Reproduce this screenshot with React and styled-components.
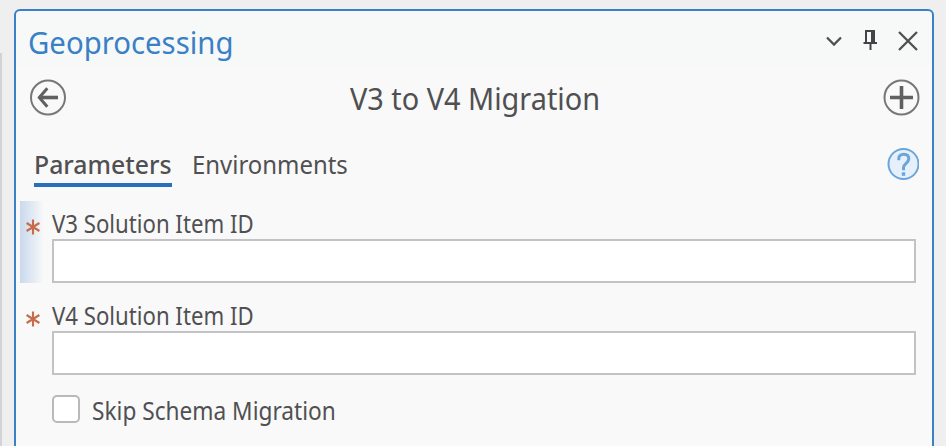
import React from 'react';
import styled, { createGlobalStyle } from 'styled-components';

const GlobalStyle = createGlobalStyle`
  *, *::before, *::after { box-sizing: border-box; }
  body {
    margin: 0;
    overflow: hidden;
    background: #efeff0;
    color: #505052;
    font-family: "Noto Sans", "Open Sans", sans-serif;
  }
`;

const Desktop = styled.div`
  display: flex;
  width: 946px;
  height: 446px;
  padding: 9px 12px 0 0;
`;

const DockEdge = styled.div`
  width: 2px;
  margin: 44px 12px 0 0;
  background: #d3d3d6;
`;

const Panel = styled.section`
  width: 920px;
  height: 437px;
  border: 2px solid #3a80c4;
  border-bottom: 0;
  border-radius: 6px 6px 0 0;
  background: linear-gradient(#f7f9f9 0 57px, #f9f9f9 57px);
`;

const Bar = styled.header`
  display: flex;
  align-items: center;
  justify-content: space-between;
  height: ${(p) => p.$height}px;
  padding: ${(p) => p.$padding};
`;

const Label = styled.span`
  display: block;
  margin: ${(p) => p.$drop || 0}px 0 0;
  white-space: pre;
  font-size: ${(p) => p.$size}px;
  line-height: ${(p) => p.$line || 36}px;
  font-weight: ${(p) => p.$weight || 400};
  color: ${(p) => p.$color || 'inherit'};
  transform: scaleX(${(p) => p.$condense || 1});
  transform-origin: ${(p) => p.$origin || 'left'} center;
`;

const WindowButtons = styled.div`
  display: flex;
  align-items: center;
`;

const IconButton = styled.button`
  display: block;
  width: ${(p) => p.$w}px;
  height: ${(p) => p.$h}px;
  margin: 0 0 ${(p) => p.$lift || 0}px ${(p) => p.$gap || 0}px;
  padding: 0;
  border: 0;
  background: none;
  svg { display: block; }
`;

const TabBar = styled.nav`
  display: flex;
  align-items: flex-start;
  height: 62px;
  padding: 18px 13px 0 18px;
`;

const Tab = styled.div`
  width: ${(p) => p.$width}px;
  height: 41px;
  margin-right: 20px;
  border-bottom: 4px solid ${(p) => (p.$active ? '#2a6fbb' : 'transparent')};
`;

const Help = styled.div`
  margin-left: auto;
  svg { display: block; }
`;

const Form = styled.div`
  display: flex;
  flex-direction: column;
  gap: 10px;
  padding: 11px 16px 0 4px;
`;

const Field = styled.label`
  display: grid;
  grid-template-columns: 32px 1fr;
  grid-template-rows: 38px 44px;
  background: ${(p) => (p.$active ? 'linear-gradient(90deg, #c9d9ec 0, #f9f9f9 24px)' : 'none')};
`;

const Required = styled.div`
  padding: 17px 0 0 5px;
  svg { display: block; }
`;

const Input = styled.input`
  grid-column: 2;
  width: 864px;
  height: 44px;
  border: 2px solid #c3c3c7;
  border-radius: 0;
  background: #fff;
  outline: none;
`;

const CheckRow = styled.label`
  display: flex;
  align-items: center;
  gap: 12px;
  height: 28px;
  margin: 10px 0 0 32px;
`;

const CheckBox = styled.span`
  width: 28px;
  height: 28px;
  border: 2px solid #b9b9bd;
  border-radius: 5px;
  background: #fff;
`;

const Star = () => (
  <svg width="16" height="18" viewBox="0 0 16 18" stroke="#c66c4b" strokeWidth="2.1" fill="none">
    <path d="M8 1.5V16.5M1.6 5L14.4 13M14.4 5L1.6 13" />
  </svg>
);

const ParamField = ({ name, active }) => (
  <Field $active={active}>
    <Required><Star /></Required>
    <Label $size={24.5} $line={46} $condense={0.905}>{name}</Label>
    <Input />
  </Field>
);

export default function App() {
  return (
    <>
      <GlobalStyle />
      <Desktop>
        <DockEdge />
        <Panel>
          <Bar $height={57} $padding="4px 14px 0 12px">
            <Label $size={30} $drop={2} $color="#3980c6" $condense={0.978}>Geoprocessing</Label>
            <WindowButtons>
              <IconButton $w={16} $h={12} $lift={1} aria-label="Options">
                <svg width="16" height="12" fill="none" stroke="#505052" strokeWidth="2.3"><path d="M1 2.5L8 9.5L15 2.5" /></svg>
              </IconButton>
              <IconButton $w={16} $h={22} $gap={20} $lift={4} aria-label="Auto hide">
                <svg width="16" height="22" fill="none" stroke="#444446" strokeWidth="2"><path d="M4 14V2H12V14M1.5 14H15M8.5 14V21" /><path d="M10.5 2V14" strokeWidth="3" /></svg>
              </IconButton>
              <IconButton $w={20} $h={20} $gap={20} $lift={2} aria-label="Close">
                <svg width="20" height="20" fill="none" stroke="#505052" strokeWidth="2.3"><path d="M1 1L19 19M19 1L1 19" /></svg>
              </IconButton>
            </WindowButtons>
          </Bar>
          <Bar $height={60} $padding="0 11px 1px 13px">
            <IconButton $w={38} $h={38} aria-label="Back">
              <svg width="38" height="38" viewBox="0 0.5 38 38" fill="none" stroke="#777779"><circle cx="19" cy="19" r="17" strokeWidth="2" /><path d="M29 19H10" stroke="#606062" strokeWidth="3.6" /><path d="M18.3 9.7L10.3 19L18.3 28.3" stroke="#606062" strokeWidth="3" /></svg>
            </IconButton>
            <Label $size={30} $drop={2} $condense={0.962} $origin="center">V3 to V4 Migration</Label>
            <IconButton $w={38} $h={38} aria-label="Add">
              <svg width="38" height="38" viewBox="0.5 0.5 38 38" fill="none" stroke="#777779"><circle cx="19" cy="19" r="17" strokeWidth="2" /><path d="M7.5 19H30.5M19 7.5V30.5" stroke="#606062" strokeWidth="3.6" /></svg>
            </IconButton>
          </Bar>
          <TabBar>
            <Tab $active $width={138}><Label $size={25} $weight={500} $condense={0.992}>Parameters</Label></Tab>
            <Tab $width={160}><Label $size={25} $condense={0.957}>Environments</Label></Tab>
            <Help>
              <svg width="32" height="36" viewBox="0.5 0 32 36" fill="none" stroke="#6ca5d9"><circle cx="17" cy="18" r="15" fill="#e6f0fa" strokeWidth="2" /><path d="M12.3 14.3V12.5C12.3 9.8 14.2 8.2 17.2 8.2C20.4 8.2 22.3 10 22.3 12.8C22.3 17 17 17.5 17 21.5V24.2" strokeWidth="3" /><path d="M17 26.3V29.8" strokeWidth="3.4" /></svg>
            </Help>
          </TabBar>
          <Form>
            <ParamField name="V3 Solution Item ID" active />
            <ParamField name="V4 Solution Item ID" />
            <CheckRow>
              <CheckBox />
              <Label $size={24.5} $drop={3} $condense={0.925}>Skip Schema Migration</Label>
            </CheckRow>
          </Form>
        </Panel>
      </Desktop>
    </>
  );
}
